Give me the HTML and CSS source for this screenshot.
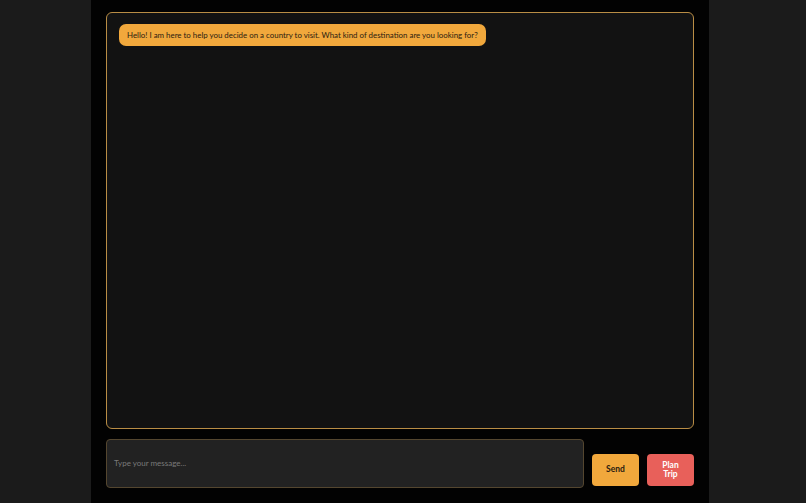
FILE: index.html
```html
<!DOCTYPE html>
<html>
<head>
<meta charset="utf-8">
<link rel="stylesheet" href="styles.css">
</head>
<body>
<div class="app">
  <div class="chat">
    <div class="bubble">Hello! I am here to help you decide on a country to visit. What kind of destination are you looking for?</div>
  </div>
  <div class="composer">
    <textarea class="input" placeholder="Type your message..."></textarea>
    <button class="btn send">Send</button>
    <button class="btn plan">Plan<br>Trip</button>
  </div>
</div>
</body>
</html>
```

FILE: styles.css
```css
html, body {
  margin: 0;
  padding: 0;
  height: 100%;
  background: #1b1b1b;
  font-family: Lato, "Open Sans", sans-serif;
}
.app {
  box-sizing: border-box;
  width: 618px;
  height: 503px;
  margin-left: 91px;
  background: #020202;
  padding: 12px 15px 0 15px;
  display: flex;
  flex-direction: column;
}
.chat {
  box-sizing: border-box;
  height: 417px;
  background: #121212;
  border: 1px solid #b98d45;
  border-radius: 6px;
  padding: 11px 12px;
  display: flex;
  flex-direction: column;
  align-items: flex-start;
}
.bubble {
  background: #f1a83c;
  color: #2b2010;
  font-size: 7.9px;
  font-weight: 400;
  line-height: 11px;
  padding: 6px 8px 5px 8px;
  border-radius: 7px;
}
.composer {
  margin-top: 10px;
  display: flex;
  align-items: flex-end;
  gap: 8px;
}
.input {
  box-sizing: border-box;
  width: 478px;
  height: 49px;
  background: #222222;
  border: 1px solid #54462f;
  border-radius: 4px;
  color: #ddd;
  font-family: Lato, sans-serif;
  font-size: 8px;
  padding: 18px 7px;
  resize: none;
  outline: none;
}
.input::placeholder {
  color: #7a7a7a;
}
.btn {
  box-sizing: border-box;
  width: 47px;
  height: 32px;
  margin-bottom: 2px;
  border: none;
  border-radius: 4px;
  font-family: Lato, sans-serif;
  font-weight: 700;
  font-size: 8.5px;
  line-height: 9.5px;
  padding: 0;
}
.send {
  background: #f1a83c;
  color: #2b2010;
}
.plan {
  background: #e8605a;
  color: #fff;
}
```
